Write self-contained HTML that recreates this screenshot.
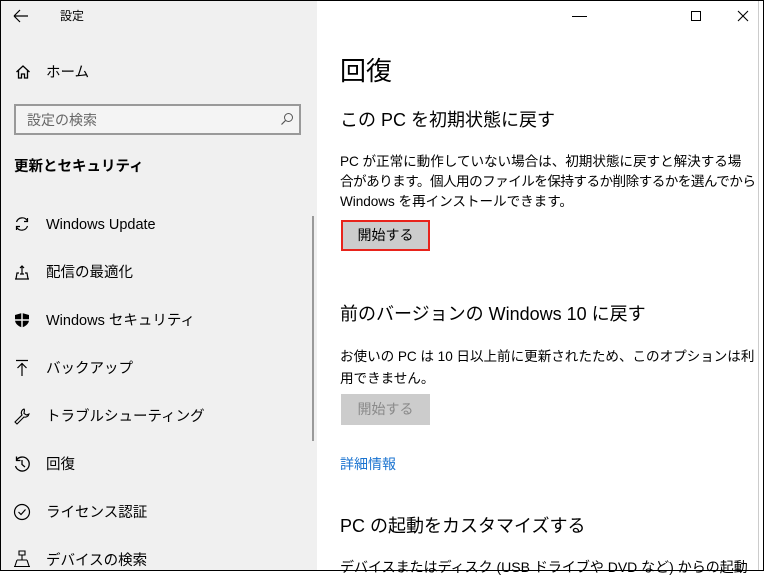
<!DOCTYPE html>
<html><head><meta charset="utf-8"><style>
*{margin:0;padding:0;box-sizing:border-box}
body{width:764px;height:571px;overflow:hidden;font-family:"Liberation Sans","Noto Sans CJK JP",sans-serif;color:#000;position:relative;background:#fff}
.frame{position:absolute;inset:0;border:1px solid #000}
.left{position:absolute;left:1px;top:1px;width:316px;height:569px;background:#f0f0f0}
.right{position:absolute;left:317px;top:1px;width:446px;height:569px;background:#fff}
.t{position:absolute;white-space:nowrap}
.h{position:absolute;white-space:nowrap;font-size:18px;line-height:24px}
.nav{position:absolute;left:45px;font-size:14.5px;color:#000;line-height:20px}
.ic{position:absolute;left:12px}
.btn{position:absolute;background:#ccc;font-size:14px;text-align:center;line-height:30px}
.p{position:absolute;left:23px;font-size:13.6px;white-space:nowrap;letter-spacing:-0.05px}
</style></head><body>
<div class="left">
  <svg class="ic" style="left:12px;top:8px" width="16" height="14"><path d="M1 7H15M1 7L7 1M1 7L7 13" stroke="#000" stroke-width="1.2" fill="none"/></svg>
  <div class="t" style="left:59px;top:6px;font-size:12px">設定</div>
  <svg class="ic" style="left:14px;top:63px" width="16" height="16"><path d="M1.5 8L8 2L14.5 8M3.5 6.5V14H6.5V10H9.5V14H12.5V6.5" stroke="#000" stroke-width="1.3" fill="none"/></svg>
  <div class="nav" style="left:45px;top:62px">ホーム</div>
  <div style="position:absolute;left:13px;top:103px;width:287px;height:31px;border:2px solid #999;background:#f4f4f4"></div>
  <div class="t" style="left:26px;top:109px;font-size:14px;color:#666">設定の検索</div>
  <svg style="position:absolute;left:279px;top:111px" width="14" height="14"><circle cx="8.5" cy="5.5" r="4" stroke="#555" fill="none"/><path d="M5.5 8.5L1.5 12.5" stroke="#555" stroke-width="1.2"/></svg>
  <div class="t" style="left:13px;top:154px;font-size:14.5px;font-weight:bold">更新とセキュリティ</div>
  <div style="position:absolute;left:311px;top:215px;width:2px;height:225px;background:#999"></div>

  <svg class="ic" style="left:13px;top:215px" width="16" height="16"><path d="M2.5 6A6 6 0 0 1 13.5 5M13.5 10A6 6 0 0 1 2.5 11M13.5 2V5.5H10M2.5 14V10.5H6" stroke="#000" stroke-width="1.2" fill="none"/></svg>
  <div class="nav" style="top:214px">Windows Update</div>
  <svg class="ic" style="left:12px;top:262px" width="18" height="18"><path d="M2 16H16M3 16L4 10H6M12 10H14L15 16M9 3V11M7 5L9 3L11 5M7 11H11" stroke="#000" stroke-width="1.2" fill="none"/></svg>
  <div class="nav" style="top:262px">配信の最適化</div>
  <svg class="ic" style="left:13px;top:311px" width="16" height="16"><path d="M8 1L15 3V8C15 12 11 14.5 8 15.5C5 14.5 1 12 1 8V3Z" fill="#000"/><path d="M8 1V16M1 8H15" stroke="#f0f0f0" stroke-width="1.5"/></svg>
  <div class="nav" style="top:310px">Windows セキュリティ</div>
  <svg class="ic" style="left:13px;top:358px" width="16" height="18"><path d="M2 1.5H14M8 4V17M3.5 9L8 4.5L12.5 9" stroke="#000" stroke-width="1.2" fill="none"/></svg>
  <div class="nav" style="top:358px">バックアップ</div>
  <svg class="ic" style="left:12px;top:406px" width="18" height="18"><path d="M11 2A4 4 0 0 0 9 8L2 15L4 17L11 10A4 4 0 0 0 16 7L13.5 8L11 6.5L11.5 3Z" stroke="#000" stroke-width="1.1" fill="none"/></svg>
  <div class="nav" style="top:406px">トラブルシューティング</div>
  <svg class="ic" style="left:12px;top:454px" width="18" height="18"><path d="M3.5 5A7 7 0 1 1 2.5 11M3.5 1.5V5.5H7.5M9 5V9.5L12 12" stroke="#000" stroke-width="1.3" fill="none"/></svg>
  <div class="nav" style="top:454px">回復</div>
  <svg class="ic" style="left:12px;top:502px" width="18" height="18"><circle cx="9" cy="9" r="7.5" stroke="#000" stroke-width="1.2" fill="none"/><path d="M5.5 9L8 11.5L12.5 6.5" stroke="#000" stroke-width="1.2" fill="none"/></svg>
  <div class="nav" style="top:502px">ライセンス認証</div>
  <svg class="ic" style="left:12px;top:549px" width="18" height="18"><path d="M6 1H12V5H6ZM9 5V10M4 10H14M4 10L2 16M14 10L16 16M1 16.5H17" stroke="#000" stroke-width="1.1" fill="none"/></svg>
  <div class="nav" style="top:550px">デバイスの検索</div>
</div>
<div class="right">
  <div style="position:absolute;left:255px;top:15px;width:15px;height:1.3px;background:#000"></div>
  <div style="position:absolute;left:374px;top:10px;width:10px;height:10px;border:1px solid #000"></div>
  <svg style="position:absolute;left:420px;top:9px" width="12" height="12"><path d="M1 1L11 11M11 1L1 11" stroke="#000" stroke-width="1.1"/></svg>
  <div style="position:absolute;left:441px;top:0;width:1px;height:569px;background:#ccc"></div>

  <div class="t" style="left:23px;top:54px;font-size:26px;line-height:32px">回復</div>
  <div class="h" style="left:23px;top:107px">この PC を初期状態に戻す</div>
  <div class="p" style="top:151px;line-height:20px">PC が正常に動作していない場合は、初期状態に戻すと解決する場<br><span style="letter-spacing:-0.55px">合があります。個人用のファイルを保持するか削除するかを選んでから</span><br>Windows を再インストールできます。</div>
  <div class="btn" style="left:24px;top:219px;width:89px;height:31px;border:2px solid #e8231b;line-height:27px">開始する</div>
  <div class="h" style="left:23px;top:301px">前のバージョンの Windows 10 に戻す</div>
  <div class="p" style="top:345px;line-height:22px">お使いの PC は 10 日以上前に更新されたため、このオプションは利<br>用できません。</div>
  <div class="btn" style="left:24px;top:393px;width:89px;height:31px;color:#8a8a8a">開始する</div>
  <div class="t" style="left:23px;top:453px;font-size:14px;color:#1a73d0">詳細情報</div>
  <div class="h" style="left:23px;top:513px">PC の起動をカスタマイズする</div>
  <div class="t" style="left:23px;top:556px;font-size:14px;line-height:20px">デバイスまたはディスク (USB ドライブや DVD など) からの起動</div>
</div>
<div class="frame"></div>
</body></html>
